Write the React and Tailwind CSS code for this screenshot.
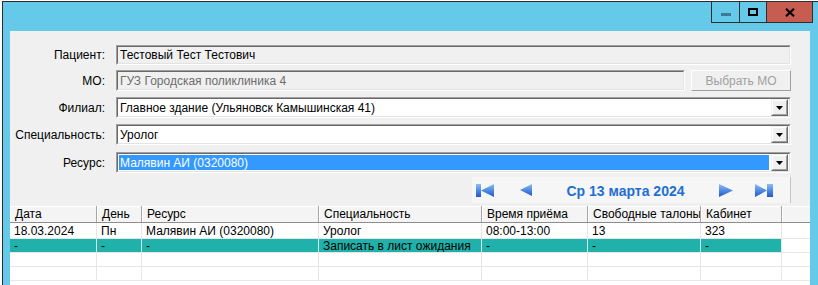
import React from 'react';

const sunkenOuter =
  'border border-t-[#a0a0a0] border-l-[#a0a0a0] border-b-white border-r-white';
const sunkenInner =
  'border border-t-[#696969] border-l-[#696969] border-b-[#e3e3e3] border-r-[#e3e3e3]';

function Arrow() {
  return (
    <div className="w-[17px] h-[17px] mr-px bg-[#f0f0f0] border border-t-[#f0f0f0] border-l-[#f0f0f0] border-b-[#696969] border-r-[#696969] flex">
      <div className="flex-1 flex items-center justify-center border border-t-white border-l-white border-b-[#a0a0a0] border-r-[#a0a0a0]">
        <svg width="7" height="4" viewBox="0 0 7 4">
          <polygon points="0,0 7,0 3.5,4" fill="#000" />
        </svg>
      </div>
    </div>
  );
}

function Label({ children }) {
  return <div className="w-[95px] text-right text-black shrink-0">{children}</div>;
}

function Combo({ value, selected }) {
  return (
    <div className={`ml-[11px] w-[675px] h-[21px] ${sunkenOuter}`}>
      <div className={`h-full bg-white flex items-center ${sunkenInner}`}>
        <div className="flex-1 h-full p-px pr-[2px]">
          <div
            className={`h-[15px] flex items-center pl-px ${
              selected ? 'bg-[#3399ff] text-white' : 'text-black'
            }`}
          >
            {value}
          </div>
        </div>
        <Arrow />
      </div>
    </div>
  );
}

function NavIcon({ kind }) {
  const grad = (
    <defs>
      <linearGradient id={'g' + kind} x1="0" y1="0" x2="0" y2="1">
        <stop offset="0" stopColor="#8fbcf2" />
        <stop offset="0.5" stopColor="#4f8be0" />
        <stop offset="1" stopColor="#2458c4" />
      </linearGradient>
    </defs>
  );
  const fill = `url(#g${kind})`;
  if (kind === 'first')
    return (
      <svg width="18" height="13" viewBox="0 0 18 13">
        {grad}
        <rect x="0" y="0" width="5" height="13" fill={fill} />
        <polygon points="18,0 5,6.5 18,13" fill={fill} />
      </svg>
    );
  if (kind === 'prev')
    return (
      <svg width="12" height="12" viewBox="0 0 12 12">
        {grad}
        <polygon points="12,0 0,6 12,12" fill={fill} />
      </svg>
    );
  if (kind === 'next')
    return (
      <svg width="14" height="13" viewBox="0 0 14 13">
        {grad}
        <polygon points="0,0 14,6.5 0,13" fill={fill} />
      </svg>
    );
  return (
    <svg width="18" height="13" viewBox="0 0 18 13">
      {grad}
      <polygon points="0,0 12,6.5 0,13" fill={fill} />
      <rect x="12" y="0" width="6" height="13" fill={fill} />
    </svg>
  );
}

const cols = [
  { name: 'Дата', w: 'w-[87px]' },
  { name: 'День', w: 'w-[45px]' },
  { name: 'Ресурс', w: 'w-[177px]' },
  { name: 'Специальность', w: 'w-[163px]' },
  { name: 'Время приёма', w: 'w-[106px]' },
  { name: 'Свободные талоны', w: 'w-[113px]' },
  { name: 'Кабинет', w: 'w-[81px]' },
];

const rows = [
  { cells: ['18.03.2024', 'Пн', 'Малявин АИ (0320080)', 'Уролог', '08:00-13:00', '13', '323'], h: 'h-[16px]' },
  { cells: ['-', '-', '-', 'Записать в лист ожидания', '-', '-', '-'], h: 'h-[14px]', teal: true },
  { cells: ['', '', '', '', '', '', ''], h: 'h-[14px]' },
  { cells: ['', '', '', '', '', '', ''], h: 'h-[14px]' },
];

export default function App() {
  return (
    <div className="w-[818px] h-[285px] bg-white overflow-hidden font-['Liberation_Sans',Arial,sans-serif] text-[12px] leading-none">
      <div className="ml-[2px] mt-px h-[284px] border-l border-t border-[#2b2b2b] bg-[#65c9ea] flex flex-col">
        {/* title bar */}
        <div className="h-[29px] shrink-0 flex justify-end items-start pr-[5px]">
          <div className="-mt-px w-[29px] h-[22px] border border-[#2e2e2e] flex items-center justify-center">
            <div className="w-[10px] h-[3px] bg-[#3b7a98] mt-[5px]" />
          </div>
          <div className="-mt-px -ml-px w-[28px] h-[22px] border border-[#2e2e2e] flex items-center justify-center">
            <div className="w-[10px] h-[8px] border-2 border-black" />
          </div>
          <div className="-mt-px -ml-px w-[47px] h-[22px] border border-[#2e2e2e] bg-[#c75c50] flex items-center justify-center">
            <svg width="10" height="9" viewBox="0 0 10 9">
              <path d="M1 0.8 L9 8.2 M9 0.8 L1 8.2" stroke="#000" strokeWidth="2.2" />
            </svg>
          </div>
        </div>

        {/* client area */}
        <div className="ml-[7px] w-[800px] flex-1 bg-[#f0f0f0] flex flex-col">
          <div className="mt-[14px] flex items-center">
            <Label>Пациент:</Label>
            <div className={`ml-[11px] w-[675px] h-[20px] ${sunkenOuter}`}>
              <div className={`h-full bg-[#f0f0f0] flex items-center pl-[2px] text-black ${sunkenInner}`}>
                Тестовый Тест Тестович
              </div>
            </div>
          </div>

          <div className="mt-[5px] flex items-center">
            <Label>МО:</Label>
            <div className={`ml-[11px] w-[569px] h-[21px] ${sunkenOuter}`}>
              <div className={`h-full bg-[#f0f0f0] flex items-center pl-[2px] text-[#6d6d6d] ${sunkenInner}`}>
                ГУЗ Городская поликлиника 4
              </div>
            </div>
            <div className="ml-[6px] w-[100px] h-[21px] bg-[#f0f0f0] border border-t-white border-l-white border-b-[#a0a0a0] border-r-[#a0a0a0] flex items-center justify-center text-[#a0a0a0]">
              Выбрать МО
            </div>
          </div>

          <div className="mt-[6px] flex items-center">
            <Label>Филиал:</Label>
            <Combo value="Главное здание (Ульяновск Камышинская 41)" />
          </div>
          <div className="mt-[6px] flex items-center">
            <Label>Специальность:</Label>
            <Combo value="Уролог" />
          </div>
          <div className="mt-[7px] flex items-center">
            <Label>Ресурс:</Label>
            <Combo value="Малявин АИ (0320080)" selected />
          </div>

          {/* date navigator */}
          <div className="mt-[4px] ml-[462px] w-[319px] h-[26px] bg-[#f6f6f6] border-r border-[#c4c4c4] flex items-center pl-[4px]">
            <NavIcon kind="first" />
            <div className="ml-[26px]">
              <NavIcon kind="prev" />
            </div>
            <div className="w-[187px] text-center font-bold text-[14px] text-[#1f6fd3] pt-px">
              Ср 13 марта 2024
            </div>
            <NavIcon kind="next" />
            <div className="ml-[22px]">
              <NavIcon kind="last" />
            </div>
          </div>

          {/* grid */}
          <div className="mt-[3px] flex-1 bg-white flex flex-col">
            <div className="h-[17px] flex bg-[#f4f4f4] border-b border-[#8e8e8e]">
              {cols.map((c) => (
                <div
                  key={c.name}
                  className={`${c.w} h-full pl-[5px] flex items-center whitespace-nowrap overflow-hidden text-black border-r border-[#a6a6a6] shadow-[inset_1px_1px_0_#ffffff]`}
                >
                  {c.name}
                </div>
              ))}
              <div className="flex-1 h-full shadow-[inset_1px_1px_0_#ffffff]" />
            </div>
            {rows.map((r, i) => (
              <div key={i} className={`${r.h} flex border-b border-[#e6e6e6]`}>
                {r.cells.map((t, j) => (
                  <div
                    key={j}
                    className={`${cols[j].w} h-full pl-[4px] flex items-center whitespace-nowrap overflow-hidden text-black border-r ${
                      r.teal ? 'bg-[#20b2aa] border-[#d6eeec]' : 'border-[#e6e6e6]'
                    }`}
                  >
                    {t}
                  </div>
                ))}
                <div className="flex-1 h-full" />
              </div>
            ))}
          </div>
        </div>
      </div>
    </div>
  );
}
